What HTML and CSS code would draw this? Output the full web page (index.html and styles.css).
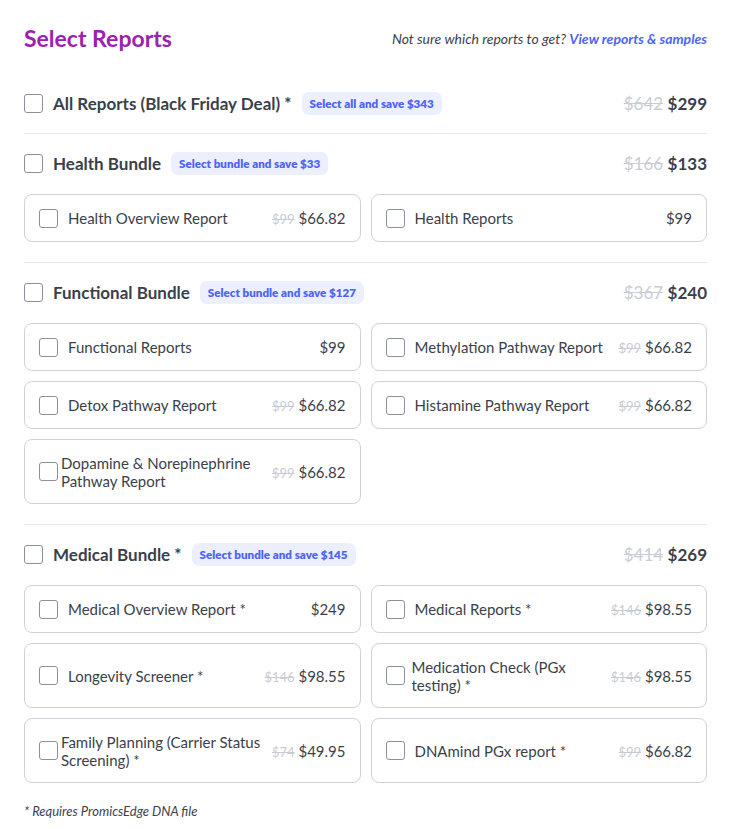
FILE: index.html
```html
<!DOCTYPE html>
<html>
<head>
<meta charset="utf-8">
<link rel="stylesheet" href="styles.css">
</head>
<body>
<div class="page">
  <div class="top">
    <h1 class="title">Select Reports</h1>
    <p class="help">Not sure which reports to get? <a class="link">View reports &amp; samples</a></p>
  </div>

  <section class="section first">
    <div class="bhead">
      <span class="cb"></span>
      <span class="bname">All Reports (Black Friday Deal) *</span>
      <span class="badge">Select all and save $343</span>
      <span class="bprice"><s>$642</s> <b>$299</b></span>
    </div>
  </section>

  <section class="section">
    <div class="bhead">
      <span class="cb"></span>
      <span class="bname">Health Bundle</span>
      <span class="badge">Select bundle and save $33</span>
      <span class="bprice"><s>$166</s> <b>$133</b></span>
    </div>
    <div class="grid">
      <div class="card"><span class="cb"></span><span class="cname">Health Overview Report</span><span class="cprice"><s>$99</s> $66.82</span></div>
      <div class="card"><span class="cb"></span><span class="cname">Health Reports</span><span class="cprice">$99</span></div>
    </div>
  </section>

  <section class="section">
    <div class="bhead">
      <span class="cb"></span>
      <span class="bname">Functional Bundle</span>
      <span class="badge">Select bundle and save $127</span>
      <span class="bprice"><s>$367</s> <b>$240</b></span>
    </div>
    <div class="grid">
      <div class="card"><span class="cb"></span><span class="cname">Functional Reports</span><span class="cprice">$99</span></div>
      <div class="card"><span class="cb"></span><span class="cname">Methylation Pathway Report</span><span class="cprice"><s>$99</s> $66.82</span></div>
      <div class="card"><span class="cb"></span><span class="cname">Detox Pathway Report</span><span class="cprice"><s>$99</s> $66.82</span></div>
      <div class="card"><span class="cb"></span><span class="cname">Histamine Pathway Report</span><span class="cprice"><s>$99</s> $66.82</span></div>
      <div class="card tall"><span class="cb"></span><span class="cname tight">Dopamine &amp; Norepinephrine Pathway Report</span><span class="cprice"><s>$99</s> $66.82</span></div>
    </div>
  </section>

  <section class="section">
    <div class="bhead">
      <span class="cb"></span>
      <span class="bname">Medical Bundle *</span>
      <span class="badge">Select bundle and save $145</span>
      <span class="bprice"><s>$414</s> <b>$269</b></span>
    </div>
    <div class="grid">
      <div class="card"><span class="cb"></span><span class="cname">Medical Overview Report *</span><span class="cprice">$249</span></div>
      <div class="card"><span class="cb"></span><span class="cname">Medical Reports *</span><span class="cprice"><s>$146</s> $98.55</span></div>
      <div class="card tall"><span class="cb"></span><span class="cname">Longevity Screener *</span><span class="cprice"><s>$146</s> $98.55</span></div>
      <div class="card tall"><span class="cb"></span><span class="cname mid">Medication Check (PGx testing) *</span><span class="cprice"><s>$146</s> $98.55</span></div>
      <div class="card tall"><span class="cb"></span><span class="cname tight">Family Planning (Carrier Status Screening) *</span><span class="cprice"><s>$74</s> $49.95</span></div>
      <div class="card tall"><span class="cb"></span><span class="cname">DNAmind PGx report *</span><span class="cprice"><s>$99</s> $66.82</span></div>
    </div>
  </section>

  <p class="note">* Requires PromicsEdge DNA file</p>
</div>
</body>
</html>
```

FILE: styles.css
```css
* { box-sizing: border-box; }
body {
  margin: 0;
  background: #ffffff;
  font-family: "Lato", "Liberation Sans", sans-serif;
  color: #3b3f4a;
}
.page {
  padding: 0 31px 0 24px;
}
.top {
  display: flex;
  justify-content: space-between;
  align-items: center;
  height: 76px;
}
.title {
  margin: 0;
  font-size: 23px;
  font-weight: 700;
  color: #9b22b0;
}
.help {
  margin: 0;
  font-size: 14px;
  font-style: italic;
  color: #3b3f4a;
}
.link {
  color: #4f63f5;
  font-weight: 700;
}
.section {
  border-top: 1px solid #e6e7ec;
  padding: 17px 0 20px;
}
.section.first {
  border-top: none;
  padding: 15px 0 18px;
}
.bhead {
  display: flex;
  align-items: center;
  height: 24px;
}
.cb {
  flex: none;
  width: 19px;
  height: 19px;
  border: 1px solid #8c909c;
  border-radius: 3px;
  background: #fff;
}
.bname {
  margin-left: 10px;
  font-size: 17px;
  font-weight: 700;
  color: #3b3f4a;
}
.badge {
  margin-left: 10px;
  background: #eceffe;
  color: #4f63f5;
  font-size: 11.6px;
  font-weight: 800;
  padding: 5px 8px;
  border-radius: 7px;
}
.bprice {
  margin-left: auto;
  font-size: 17px;
}
.bprice s {
  color: #c9ccd4;
  font-weight: 400;
}
.bprice b {
  color: #3b3f4a;
}
.grid {
  display: grid;
  grid-template-columns: 1fr 1fr;
  gap: 10px;
  margin-top: 19px;
}
.card {
  display: flex;
  align-items: center;
  min-height: 48px;
  border: 1px solid #cfd1dc;
  border-radius: 8px;
  padding: 6px 14px;
}
.card.tall {
  min-height: 65px;
}
.cname {
  margin-left: 10px;
  font-size: 15px;
  color: #3b3f4a;
  line-height: 18px;
}
.cname.tight {
  margin-left: 3px;
  padding-right: 10px;
}
.cname.mid {
  margin-left: 7px;
  padding-right: 10px;
}
.cprice {
  margin-left: auto;
  font-size: 15px;
  white-space: nowrap;
  color: #3b3f4a;
}
.cprice s {
  color: #c9ccd4;
  font-size: 13px;
}
.note {
  margin: 0;
  font-size: 13px;
  font-style: italic;
  color: #3b3f4a;
}
```
